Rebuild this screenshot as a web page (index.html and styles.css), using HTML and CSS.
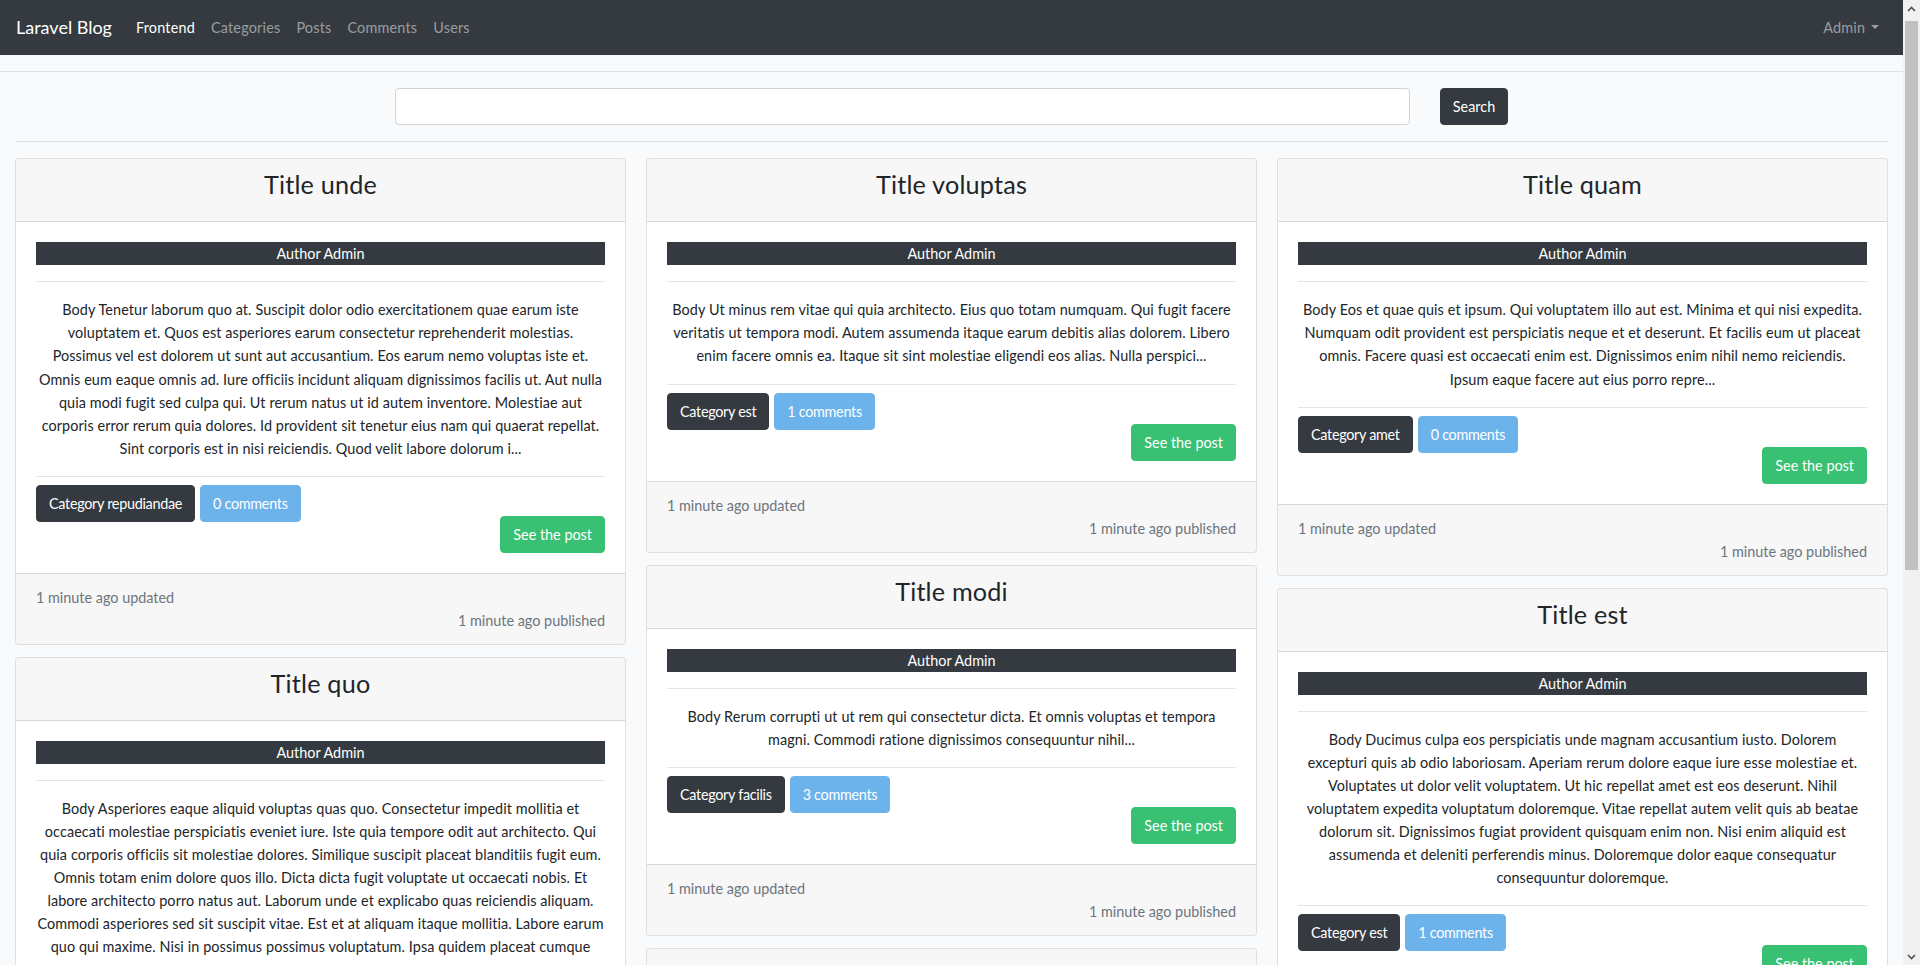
FILE: index.html
```html
<!DOCTYPE html>
<html lang="en">
<head>
<meta charset="utf-8">
<title>Laravel Blog</title>
<link rel="stylesheet" href="styles.css">
</head>
<body>
<div class="page">
<nav class="navbar">
  <a class="brand" href="#">Laravel Blog</a>
  <ul class="nav">
    <li><a class="nav-link active" href="#">Frontend</a></li>
    <li><a class="nav-link" href="#">Categories</a></li>
    <li><a class="nav-link" href="#">Posts</a></li>
    <li><a class="nav-link" href="#">Comments</a></li>
    <li><a class="nav-link" href="#">Users</a></li>
  </ul>
  <div class="nav-right">
    <a class="nav-link dropdown" href="#">Admin<span class="caret"></span></a>
  </div>
</nav>
<hr class="rule">
<div class="container">
  <form class="search">
    <input class="search-input" type="text">
    <button class="btn btn-dark" type="button">Search</button>
  </form>
  <hr class="rule">
  <div class="card-grid">
    <div class="col">
      <div class="card">
        <div class="card-header"><h3>Title unde</h3></div>
        <div class="card-body">
          <div class="author">Author Admin</div>
          <hr class="rule">
          <p class="post-body">Body Tenetur laborum quo at. Suscipit dolor odio exercitationem quae earum iste<br>voluptatem et. Quos est asperiores earum consectetur reprehenderit molestias.<br>Possimus vel est dolorem ut sunt aut accusantium. Eos earum nemo voluptas iste et.<br>Omnis eum eaque omnis ad. Iure officiis incidunt aliquam dignissimos facilis ut. Aut nulla<br>quia modi fugit sed culpa qui. Ut rerum natus ut id autem inventore. Molestiae aut<br>corporis error rerum quia dolores. Id provident sit tenetur eius nam qui quaerat repellat.<br>Sint corporis est in nisi reiciendis. Quod velit labore dolorum i...</p>
          <hr class="rule rule-tight">
          <div class="tags"><a class="btn btn-dark" href="#">Category repudiandae</a><a class="btn btn-info" href="#">0 comments</a></div>
          <div class="see"><a class="btn btn-success" href="#">See the post</a></div>
        </div>
        <div class="card-footer">
          <div>1 minute ago updated</div>
          <div class="right">1 minute ago published</div>
        </div>
      </div>
      <div class="card">
        <div class="card-header"><h3>Title quo</h3></div>
        <div class="card-body">
          <div class="author">Author Admin</div>
          <hr class="rule">
          <p class="post-body">Body Asperiores eaque aliquid voluptas quas quo. Consectetur impedit mollitia et<br>occaecati molestiae perspiciatis eveniet iure. Iste quia tempore odit aut architecto. Qui<br>quia corporis officiis sit molestiae dolores. Similique suscipit placeat blanditiis fugit eum.<br>Omnis totam enim dolore quos illo. Dicta dicta fugit voluptate ut occaecati nobis. Et<br>labore architecto porro natus aut. Laborum unde et explicabo quas reiciendis aliquam.<br>Commodi asperiores sed sit suscipit vitae. Est et at aliquam itaque mollitia. Labore earum<br>quo qui maxime. Nisi in possimus possimus voluptatum. Ipsa quidem placeat cumque<br>nostrum dolor facilis nobis voluptas molestiae quia non rerum dolore...</p>
          <hr class="rule rule-tight">
          <div class="tags"><a class="btn btn-dark" href="#">Category quia</a><a class="btn btn-info" href="#">2 comments</a></div>
          <div class="see"><a class="btn btn-success" href="#">See the post</a></div>
        </div>
        <div class="card-footer">
          <div>1 minute ago updated</div>
          <div class="right">1 minute ago published</div>
        </div>
      </div>
    </div>
    <div class="col">
      <div class="card">
        <div class="card-header"><h3>Title voluptas</h3></div>
        <div class="card-body">
          <div class="author">Author Admin</div>
          <hr class="rule">
          <p class="post-body">Body Ut minus rem vitae qui quia architecto. Eius quo totam numquam. Qui fugit facere<br>veritatis ut tempora modi. Autem assumenda itaque earum debitis alias dolorem. Libero<br>enim facere omnis ea. Itaque sit sint molestiae eligendi eos alias. Nulla perspici...</p>
          <hr class="rule rule-tight">
          <div class="tags"><a class="btn btn-dark" href="#">Category est</a><a class="btn btn-info" href="#">1 comments</a></div>
          <div class="see"><a class="btn btn-success" href="#">See the post</a></div>
        </div>
        <div class="card-footer">
          <div>1 minute ago updated</div>
          <div class="right">1 minute ago published</div>
        </div>
      </div>
      <div class="card">
        <div class="card-header"><h3>Title modi</h3></div>
        <div class="card-body">
          <div class="author">Author Admin</div>
          <hr class="rule">
          <p class="post-body">Body Rerum corrupti ut ut rem qui consectetur dicta. Et omnis voluptas et tempora<br>magni. Commodi ratione dignissimos consequuntur nihil...</p>
          <hr class="rule rule-tight">
          <div class="tags"><a class="btn btn-dark" href="#">Category facilis</a><a class="btn btn-info" href="#">3 comments</a></div>
          <div class="see"><a class="btn btn-success" href="#">See the post</a></div>
        </div>
        <div class="card-footer">
          <div>1 minute ago updated</div>
          <div class="right">1 minute ago published</div>
        </div>
      </div>
      <div class="card">
        <div class="card-header"><h3>Title dolor</h3></div>
        <div class="card-body">
          <div class="author">Author Admin</div>
          <hr class="rule">
          <p class="post-body">Body Quia sed dolorem et quis. Voluptas est eum ut nihil...</p>
        </div>
      </div>
    </div>
    <div class="col">
      <div class="card">
        <div class="card-header"><h3>Title quam</h3></div>
        <div class="card-body">
          <div class="author">Author Admin</div>
          <hr class="rule">
          <p class="post-body">Body Eos et quae quis et ipsum. Qui voluptatem illo aut est. Minima et qui nisi expedita.<br>Numquam odit provident est perspiciatis neque et et deserunt. Et facilis eum ut placeat<br>omnis. Facere quasi est occaecati enim est. Dignissimos enim nihil nemo reiciendis.<br>Ipsum eaque facere aut eius porro repre...</p>
          <hr class="rule rule-tight">
          <div class="tags"><a class="btn btn-dark" href="#">Category amet</a><a class="btn btn-info" href="#">0 comments</a></div>
          <div class="see"><a class="btn btn-success" href="#">See the post</a></div>
        </div>
        <div class="card-footer">
          <div>1 minute ago updated</div>
          <div class="right">1 minute ago published</div>
        </div>
      </div>
      <div class="card">
        <div class="card-header"><h3>Title est</h3></div>
        <div class="card-body">
          <div class="author">Author Admin</div>
          <hr class="rule">
          <p class="post-body">Body Ducimus culpa eos perspiciatis unde magnam accusantium iusto. Dolorem<br>excepturi quis ab odio laboriosam. Aperiam rerum dolore eaque iure esse molestiae et.<br>Voluptates ut dolor velit voluptatem. Ut hic repellat amet est eos deserunt. Nihil<br>voluptatem expedita voluptatum doloremque. Vitae repellat autem velit quis ab beatae<br>dolorum sit. Dignissimos fugiat provident quisquam enim non. Nisi enim aliquid est<br>assumenda et deleniti perferendis minus. Doloremque dolor eaque consequatur<br>consequuntur doloremque.</p>
          <hr class="rule rule-tight">
          <div class="tags"><a class="btn btn-dark" href="#">Category est</a><a class="btn btn-info" href="#">1 comments</a></div>
          <div class="see"><a class="btn btn-success" href="#">See the post</a></div>
        </div>
        <div class="card-footer">
          <div>1 minute ago updated</div>
          <div class="right">1 minute ago published</div>
        </div>
      </div>
    </div>
  </div>
</div>
</div>
<div class="scrollbar" aria-hidden="true">
  <div class="sb-arrow"><svg width="9" height="6" viewBox="0 0 9 6"><polyline points="1,5 4.5,1.5 8,5" fill="none" stroke="#505050" stroke-width="1.6"/></svg></div>
  <div class="sb-track"><div class="sb-thumb"></div></div>
  <div class="sb-arrow"><svg width="9" height="6" viewBox="0 0 9 6"><polyline points="1,1 4.5,4.5 8,1" fill="none" stroke="#505050" stroke-width="1.6"/></svg></div>
</div>
</body>
</html>
```

FILE: styles.css
```css
* { box-sizing: border-box; }
html { font-size: 16px; }
body {
  margin: 0;
  display: flex;
  align-items: flex-start;
  background: #f8fafc;
  font-family: Lato, "Noto Sans", sans-serif;
  font-size: 14.4px;
  line-height: 1.6;
  color: #212529;
}
a { text-decoration: none; }

.page { flex: 1; min-width: 0; }

.scrollbar {
  position: sticky;
  top: 0;
  width: 17px;
  height: 965px;
  flex-shrink: 0;
  background: #f1f1f1;
  display: flex;
  flex-direction: column;
}
.sb-arrow {
  height: 17px;
  display: flex;
  align-items: center;
  justify-content: center;
}
.sb-track {
  flex: 1;
  padding: 4px 2px 0;
}
.sb-thumb {
  height: 549px;
  background: #c1c1c1;
}

.navbar {
  display: flex;
  align-items: center;
  background: #343a40;
  padding: 8px 16px;
}
.brand {
  color: #fff;
  font-size: 18px;
  line-height: 28.8px;
  padding: 5.12px 0;
  margin-right: 16px;
}
.nav {
  display: flex;
  list-style: none;
  margin: 0;
  padding: 0;
}
.nav-link {
  display: block;
  padding: 8px 8px;
  color: rgba(255,255,255,.5);
  letter-spacing: .2px;
}
.nav-link.active { color: #fff; }
.nav-right { margin-left: auto; }
.caret {
  display: inline-block;
  margin-left: .4em;
  vertical-align: .255em;
  border-top: .3em solid;
  border-right: .3em solid transparent;
  border-left: .3em solid transparent;
  border-bottom: 0;
}

.rule {
  margin: 16px 0;
  border: 0;
  border-top: 1px solid rgba(0,0,0,.1);
  height: 0;
}
.rule-tight { margin-bottom: 8px; }

.container { padding: 0 15px; }

.search {
  display: flex;
  justify-content: center;
  gap: 30px;
  margin: 0;
}
.search-input {
  width: 1015px;
  height: 37.04px;
  border: 1px solid #ced4da;
  border-radius: .25rem;
  background: #fff;
  padding: 6px 12px;
  font: inherit;
}

.btn {
  display: inline-block;
  padding: 6px 12px;
  font-family: inherit;
  font-size: 14.4px;
  line-height: 1.6;
  border: 1px solid transparent;
  border-radius: .25rem;
  color: #fff;
  text-align: center;
  white-space: nowrap;
  cursor: pointer;
}
.tags .btn { letter-spacing: -.3px; }
.btn-dark { background: #343a40; border-color: #343a40; }
.btn-info { background: #6cb2eb; border-color: #6cb2eb; }
.btn-success { background: #38c172; border-color: #38c172; }

.card-grid {
  display: grid;
  grid-template-columns: repeat(3, 1fr);
  column-gap: 20px;
  align-items: start;
}
.col { display: flex; flex-direction: column; }

.card {
  background: #fff;
  border: 1px solid rgba(0,0,0,.125);
  border-radius: .25rem;
  margin-bottom: 12px;
  overflow: hidden;
}
.card-header {
  background: rgba(0,0,0,.03);
  padding: 12px 20px;
  border-bottom: 1px solid rgba(0,0,0,.125);
  text-align: center;
}
.card-header h3 {
  margin: -2px 0 10px;
  font-size: 25.2px;
  font-weight: 400;
  line-height: 1.2;
  letter-spacing: .2px;
}
.card-body { padding: 20px; }
.author {
  background: #343a40;
  color: #fff;
  text-align: center;
}
.post-body {
  text-align: center;
  margin: 0 0 16px;
  letter-spacing: .1px;
}
.tags { display: flex; gap: 5px; }
.see {
  display: flex;
  justify-content: flex-end;
  margin-top: -6px;
}
.card-footer {
  background: rgba(0,0,0,.03);
  border-top: 1px solid rgba(0,0,0,.125);
  padding: 12px 20px;
  color: #6c757d;
}
.card-footer .right { text-align: right; }
```
